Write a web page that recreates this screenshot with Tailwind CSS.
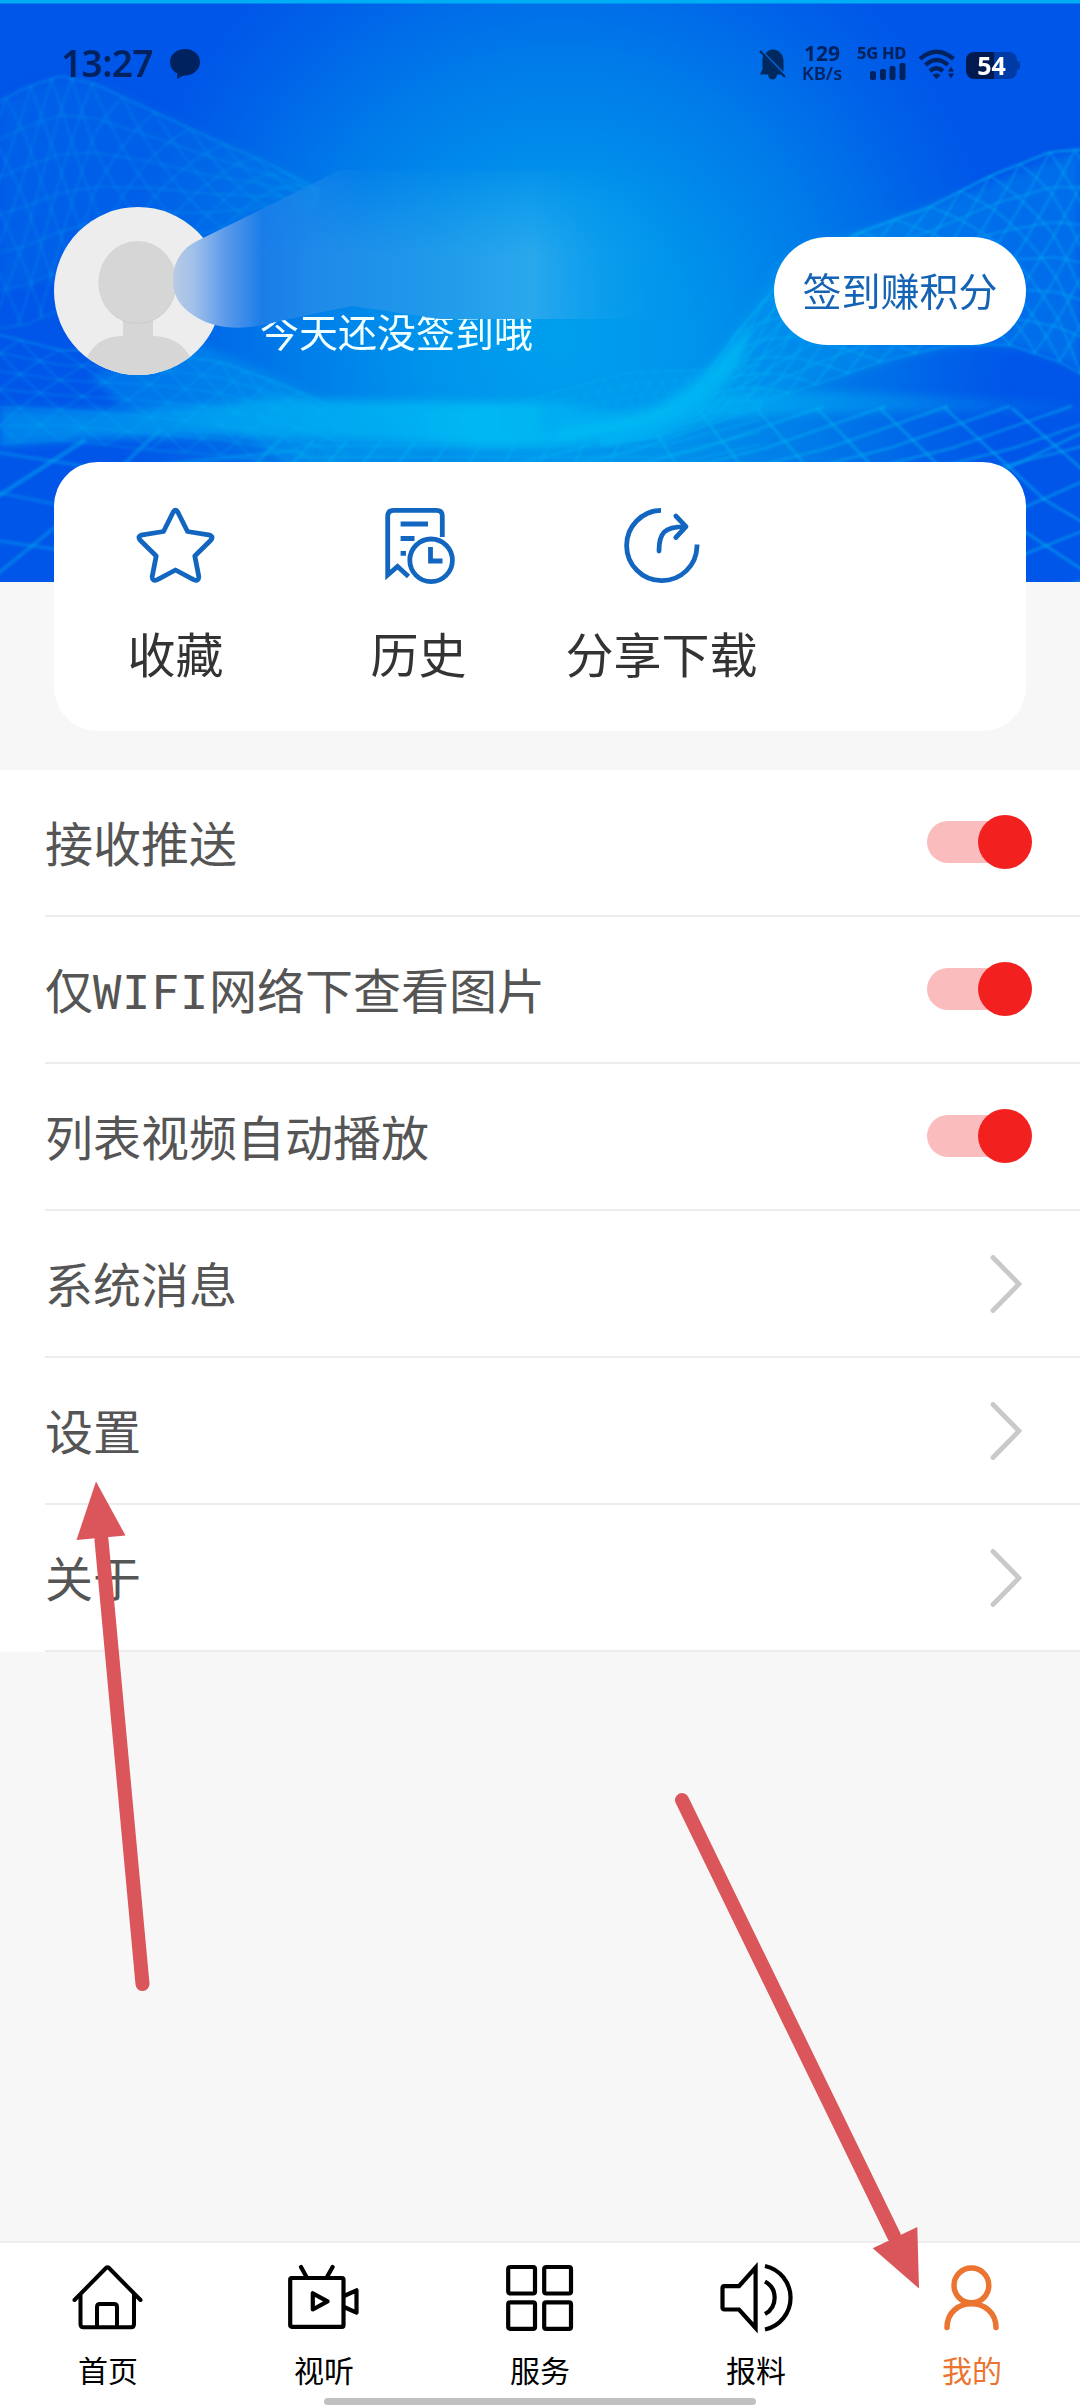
<!DOCTYPE html>
<html lang="zh-CN">
<head>
<meta charset="utf-8">
<title>我的</title>
<script src="https://cdn.jsdelivr.net/npm/@tailwindcss/browser@4"></script>
</head>
<body class="relative w-[1080px] h-[2408px] overflow-hidden bg-[#f7f7f7] font-['Noto_Sans_CJK_SC',sans-serif] flex flex-col">

<!-- Header -->
<header class="relative h-[582px] shrink-0 bg-[#0055e8]">
  <svg class="absolute inset-0" width="1080" height="582" viewBox="0 0 1080 582" fill="none">
    <defs>
      <radialGradient id="glow" gradientUnits="userSpaceOnUse" cx="0" cy="0" r="1" gradientTransform="translate(560 340) scale(450 470)">
        <stop offset="0" stop-color="#009fee"/><stop offset=".3" stop-color="#0094ec"/><stop offset=".6" stop-color="#007be9"/><stop offset=".85" stop-color="#0062e8"/><stop offset="1" stop-color="#0056e8"/>
      </radialGradient>
      <linearGradient id="band" x1="0" y1="0" x2="1080" y2="0" gradientUnits="userSpaceOnUse">
        <stop offset="0" stop-color="#00a8f0" stop-opacity=".55"/><stop offset=".3" stop-color="#00b4f2" stop-opacity=".75"/><stop offset=".45" stop-color="#00bdf4" stop-opacity=".85"/><stop offset=".62" stop-color="#00baf4" stop-opacity=".7"/><stop offset="1" stop-color="#00a0f0" stop-opacity=".1"/>
      </linearGradient>
      <filter id="soft" x="-10%" y="-30%" width="120%" height="160%"><feGaussianBlur stdDeviation="5"/></filter>
      <filter id="slight"><feGaussianBlur stdDeviation="1.1"/></filter>
    </defs>
    <rect width="1080" height="582" fill="url(#glow)"/>
    <g filter="url(#soft)">
      <path d="M0 105Q60 60 130 98L320 185L280 230L0 290Z" fill="#0080ea" opacity=".22"/>
      <path d="M0 408Q160 415 270 398Q400 402 560 402Q640 425 700 395Q800 385 1080 405V412Q800 410 700 420Q600 452 470 447Q340 436 220 436Q100 436 0 446Z" fill="url(#band)"/>
      <path d="M540 405Q620 375 700 372Q760 300 780 260L1080 150V370Q1000 325 880 365Q760 395 640 440Q580 445 540 430Z" fill="#009df0" opacity=".34"/>
      <path d="M560 426Q640 425 690 385Q720 362 750 325Q745 375 700 402Q640 436 560 440Z" fill="#00c0f5" opacity=".7"/>
      <path d="M190 340Q280 375 330 405Q400 425 440 446Q380 470 290 468Q250 425 120 405L90 375Z" fill="#00a8f0" opacity=".35"/>
    </g>
    <g id="mesh" filter="url(#slight)"></g>
    <rect width="1080" height="3.5" fill="#00aef6"/>
  </svg>

  <!-- Status bar -->
  <div class="relative flex items-center justify-between h-[128px] pl-[61px] pr-[62px] text-[#00225f] font-['Noto_Sans',sans-serif]">
    <div class="flex items-center gap-[17px]">
      <span class="text-[37px] leading-none font-semibold tracking-[-0.6px] w-[92px] whitespace-nowrap -mt-[3px]">13:27</span>
      <svg width="30" height="30" viewBox="0 0 30 30" fill="#00225f"><path d="M15 0C23.300 0 30 5.600 30 13S23.300 26.500 15 26.500Q12.500 26.500 7 30L7.500 24.500C3 22.500 0 18 0 13C0 5.600 6.700 0 15 0Z"/></svg>
    </div>
    <div class="flex items-center">
      <svg width="27" height="31" viewBox="0 0 27 31" fill="#00295f"><path d="M6.500 4.500Q9.500 .5 13.500 .5C19.500 .5 24.500 5 24.500 12V22.800ZM3.500 10Q3.500 8.500 4.200 6.500L22.500 25.500H18Q17.500 30.500 13.500 30.500T9 25.500H1L3.500 20Z"/><path d="M1 2L26 28" stroke="#00295f" stroke-width="2.200"/></svg>
      <div class="ml-[13px] w-[46px] h-[38px] -mt-[3px] flex flex-col items-center justify-between">
        <span class="text-[21px] leading-[18px] font-bold">129</span>
        <span class="text-[18.500px] leading-[18px] font-semibold">KB/s</span>
      </div>
      <div class="ml-[11px] w-[50px] flex flex-col items-end -mt-[2px]">
        <span class="text-[16.500px] leading-[13px] font-extrabold whitespace-nowrap tracking-[-0.3px]">5G HD</span>
        <svg class="mt-[4px]" width="36" height="17" viewBox="0 0 36 17" fill="#00225f"><rect y="8" width="6" height="9" rx="2"/><rect x="10" y="6" width="6" height="11" rx="2"/><rect x="19.500" y="3" width="6" height="14" rx="2"/><rect x="29.500" width="6" height="17" rx="2"/></svg>
      </div>
      <svg class="ml-[12px]" width="38" height="31" viewBox="0 0 38 31" fill="none" stroke="#00225f" stroke-width="4.300"><path d="M2 10Q18.500-4.500 35.500 10"/><path d="M7.500 16Q18.500 6 30 16"/><path d="M12 22Q18.500 16.500 25 22"/><path d="M14.500 26Q18.500 23 22.500 26L18.500 30Z" fill="#00225f" stroke="none"/><path d="M30 22.500L33 17.500L36 22.500ZM30 24.500H36L33 29.500Z" fill="#00225f" stroke="none"/></svg>
      <div class="relative mt-[2px] ml-[10px] w-[51px] h-[27px] rounded-[8px] bg-linear-to-r from-[#001a50] from-55% to-[#003ba5] to-55% flex items-center justify-center text-white text-[25px] font-bold leading-none">54
        <span class="absolute -right-[3px] top-[9px] w-[3px] h-[9px] rounded-r-[3px] bg-[#003ba5]"></span>
      </div>
      <span class="w-[1px]"></span>
    </div>
  </div>

  <!-- Profile -->
  <div class="relative flex items-start pl-[54px] pr-[54px] pt-[79px]">
    <svg width="168" height="168" viewBox="0 0 168 168" class="rounded-full bg-[#ededed]"><path d="M34 148C42 134 55 129 69 129V110H99V129C113 129 128 135 135 148L150 168H20Z" fill="#d6d6d6"/><ellipse cx="83.500" cy="76" rx="39" ry="41" fill="#cccccc"/><ellipse cx="83.500" cy="75" rx="39" ry="41" fill="#d6d6d6"/></svg>
    <div class="ml-[38px] mt-[95px] grow text-[39px] leading-[56px] text-[#f0ffff]">今天还没签到哦</div>
    <div class="mt-[30px] w-[252px] h-[108px] pb-[3px] rounded-full bg-white flex items-center justify-center text-[39px] leading-none text-[#1463b4]">签到赚积分</div>
  </div>

  <!-- Brushed-out nickname -->
  <svg class="absolute left-0 top-0" width="760" height="340" viewBox="0 0 760 340">
    <defs>
      <linearGradient id="smear" gradientUnits="userSpaceOnUse" x1="173" y1="0" x2="700" y2="0">
        <stop offset="0" stop-color="#b9cbe3"/><stop offset=".04" stop-color="#a0c0ea"/><stop offset=".1" stop-color="#5b9aea"/><stop offset=".17" stop-color="#1a7de8"/><stop offset=".27" stop-color="#1f8ae9"/><stop offset=".5" stop-color="#209aea"/><stop offset=".68" stop-color="#2aa8ec"/><stop offset=".82" stop-color="#12a0ed" stop-opacity=".6"/><stop offset="1" stop-color="#0094ec" stop-opacity="0"/>
      </linearGradient>
      <linearGradient id="fade" x1="0" y1="160" x2="0" y2="320" gradientUnits="userSpaceOnUse"><stop offset="0" stop-color="#000"/><stop offset=".2" stop-color="#555"/><stop offset=".6" stop-color="#fff"/></linearGradient>
      <linearGradient id="fadel" x1="170" y1="0" x2="360" y2="0" gradientUnits="userSpaceOnUse"><stop offset="0" stop-color="#fff"/><stop offset=".4" stop-color="#fff"/><stop offset="1" stop-color="#fff" stop-opacity="0"/></linearGradient>
      <mask id="m" maskUnits="userSpaceOnUse" x="0" y="0" width="760" height="340"><rect width="760" height="340" fill="url(#fade)"/><rect width="760" height="340" fill="url(#fadel)"/></mask>
    </defs>
    <path mask="url(#m)" d="M173 280C173 262 182 248 197 241L260 210L340 170H730V319H440L352 306L280 321Q225 337 193 315C178 305 173 294 173 280Z" fill="url(#smear)"/>
  </svg>
</header>

<!-- Shortcuts -->
<section class="relative -mt-[120px] mx-[54px] h-[269px] shrink-0 rounded-[44px] bg-white grid grid-cols-4 text-[48px] leading-[70px] text-[#333]">
  <div class="flex flex-col items-center pt-[43px] gap-[32px]">
    <svg width="80" height="80" viewBox="0 0 80 80" fill="none" stroke="#1266bf" stroke-width="4.800" stroke-linejoin="round"><path d="M37 7.500Q39.500 3 42 7.500L51.500 26.500L72.500 29.800Q78.500 31.200 74.500 35.500L58.800 51L62.800 71.500Q63 77 57.500 74.600L39.500 65L21.500 74.600Q16 77 16.200 71.500L20.200 51L4.500 35.500Q.5 31.200 6.500 29.800L27.500 26.500Z"/></svg>
    <span>收藏</span>
  </div>
  <div class="flex flex-col items-center pt-[43px] gap-[32px]">
    <svg width="80" height="80" viewBox="0 0 80 80" fill="none" stroke="#1266bf" stroke-width="4.800"><path d="M63.300 32V11.300Q63.300 5.300 57.300 5.300H14.700Q8.700 5.300 8.700 11.300V70L18.500 61.500L29.500 71.500"/><path d="M21.600 19H49M21.600 33.500H35.500M21.600 48.300H27"/><circle cx="52.100" cy="55.300" r="21.300"/><path d="M51.500 42V56H63.500"/></svg>
    <span>历史</span>
  </div>
  <div class="flex flex-col items-center pt-[43px] gap-[32px]">
    <svg width="80" height="80" viewBox="0 0 80 80" fill="none" stroke="#1266bf" stroke-width="4.800"><path d="M39 5.300A35.200 35.200 0 1 0 75 41.500V39.500"/><path stroke-linecap="round" stroke-linejoin="round" d="M37 46C37 28 42 21.700 63 21.700M53.800 11L64 21.700L53.800 32.500"/></svg>
    <span class="whitespace-nowrap">分享下载</span>
  </div>
</section>

<!-- Settings list -->
<section id="list" class="mt-[39px] h-[882px] shrink-0 bg-white pl-[45px] grid grid-rows-6 text-[48px] leading-[70px] text-[#555]">
  <div class="border-b-2 border-[#ededed] flex items-center justify-between pr-[48px]"><span class="pb-[4px]">接收推送</span>
    <span class="relative w-[105px] h-[54px] -mt-[1px] flex items-center"><i class="w-[95px] h-[42px] rounded-full bg-[#fabcbc]"></i><i class="absolute right-0 w-[54px] h-[54px] rounded-full bg-[#f2201f]"></i></span></div>
  <div class="border-b-2 border-[#ededed] flex items-center justify-between pr-[48px]"><span class="pb-[4px]">仅<span class="font-['DejaVu_Sans_Mono',monospace] text-[47px] tracking-[0.7px] leading-none">WIFI</span>网络下查看图片</span>
    <span class="relative w-[105px] h-[54px] -mt-[1px] flex items-center"><i class="w-[95px] h-[42px] rounded-full bg-[#fabcbc]"></i><i class="absolute right-0 w-[54px] h-[54px] rounded-full bg-[#f2201f]"></i></span></div>
  <div class="border-b-2 border-[#ededed] flex items-center justify-between pr-[48px]"><span class="pb-[4px]">列表视频自动播放</span>
    <span class="relative w-[105px] h-[54px] -mt-[1px] flex items-center"><i class="w-[95px] h-[42px] rounded-full bg-[#fabcbc]"></i><i class="absolute right-0 w-[54px] h-[54px] rounded-full bg-[#f2201f]"></i></span></div>
  <div class="border-b-2 border-[#ededed] flex items-center justify-between pr-[58px]"><span class="pb-[4px]">系统消息</span>
    <svg width="32" height="58" viewBox="0 0 32 58" fill="none" stroke="#c9c9c9" stroke-width="4.800" stroke-linecap="round"><path d="M3 2.500L29 29L3 55.500"/></svg></div>
  <div class="border-b-2 border-[#ededed] flex items-center justify-between pr-[58px]"><span class="pb-[4px]">设置</span>
    <svg width="32" height="58" viewBox="0 0 32 58" fill="none" stroke="#c9c9c9" stroke-width="4.800" stroke-linecap="round"><path d="M3 2.500L29 29L3 55.500"/></svg></div>
  <div class="border-b-2 border-[#ededed] flex items-center justify-between pr-[58px]"><span class="pb-[4px]">关于</span>
    <svg width="32" height="58" viewBox="0 0 32 58" fill="none" stroke="#c9c9c9" stroke-width="4.800" stroke-linecap="round"><path d="M3 2.500L29 29L3 55.500"/></svg></div>
</section>

<!-- Tab bar -->
<nav class="relative mt-auto h-[167px] shrink-0 border-t-2 border-[#eeeeee] bg-white grid grid-cols-5 text-[30px] leading-[44px] text-black">
  <div class="flex flex-col items-center pt-[19px] gap-[13px]">
    <svg width="72" height="72" viewBox="0 0 72 72" fill="none" stroke="#000" stroke-width="4" stroke-linecap="round"><path d="M2.500 38L34 6Q35.500 4.500 37 6L68.500 38M8.500 32V62.300Q8.500 65.300 11.500 65.300H59Q62 65.300 62 62.300V32M25 65V45Q25 42 28 42H42Q45 42 45 45V65"/></svg>
    <span>首页</span>
  </div>
  <div class="flex flex-col items-center pt-[19px] gap-[13px]">
    <svg width="72" height="72" viewBox="0 0 72 72" fill="none" stroke="#000" stroke-width="4.200" stroke-linecap="round" stroke-linejoin="round"><rect x="2.200" y="16" width="53.300" height="48.800" rx="1.500"/><path d="M13 5L18.500 15M44.600 5L39 15M24.800 31.300V47.500L39.500 39.300ZM56 34L68.500 28.300V50.700L56 45"/></svg>
    <span>视听</span>
  </div>
  <div class="flex flex-col items-center pt-[19px] gap-[13px]">
    <svg width="72" height="72" viewBox="0 0 72 72" fill="none" stroke="#000" stroke-width="4.200"><rect x="4.200" y="5" width="26.800" height="26.500" rx="2"/><rect x="40.200" y="5" width="26.800" height="26.500" rx="2"/><rect x="4.200" y="40.400" width="26.800" height="26.500" rx="2"/><rect x="40.200" y="40.400" width="26.800" height="26.500" rx="2"/></svg>
    <span>服务</span>
  </div>
  <div class="flex flex-col items-center pt-[19px] gap-[13px]">
    <svg class="overflow-visible" width="72" height="72" viewBox="0 0 72 72" fill="none" stroke="#000" stroke-width="4.200"><path d="M35.600 5.500V66L19 47.500H4.500Q2.500 47.500 2.500 45.500V26.200Q2.500 24.200 4.500 24.200H19Z"/><path d="M45 4A32.500 32.500 0 0 1 45 67.500M45 19.500A18.500 18.500 0 0 1 45 52"/></svg>
    <span>报料</span>
  </div>
  <div class="flex flex-col items-center pt-[19px] gap-[13px] text-[#ea7430]">
    <svg width="72" height="72" viewBox="0 0 72 72" fill="none" stroke="currentColor" stroke-width="5.500" stroke-linecap="round"><circle cx="35.400" cy="23.400" r="17.400"/><path d="M11 65.500C11 50 23 41.800 35.400 41.800S60 50 60 65.500"/></svg>
    <span>我的</span>
  </div>
  <div class="absolute left-[324px] bottom-[3px] w-[432px] h-[7px] rounded-full bg-[#c1c1c1]"></div>
</nav>

<!-- Annotation arrows -->
<svg class="absolute left-0 top-0" width="1080" height="2408" viewBox="0 0 1080 2408" fill="#da565b" stroke="#da565b" stroke-linecap="round">
  <path d="M101.500 1540L142.500 1984" stroke-width="14"/><path d="M96 1481.500L76.500 1540L125.500 1535.500Z" stroke="none"/>
  <path d="M682 1800L894 2236" stroke-width="14"/><path d="M919 2288.500L872.700 2248.300L917.300 2227Z" stroke="none"/>
</svg>

<script>
const g = document.getElementById('mesh');
// point at t (0..1) along a polyline
function at(p, t) {
  const n = p.length - 1, i = Math.min(n - 1, Math.max(0, Math.floor(t * n))), f = t * n - i;
  return [p[i][0] + (p[i + 1][0] - p[i][0]) * f, p[i][1] + (p[i + 1][1] - p[i][1]) * f];
}
function line(pts, o, w) {
  const e = document.createElementNS('http://www.w3.org/2000/svg', 'polyline');
  e.setAttribute('points', pts.map(p => p[0].toFixed(1) + ',' + p[1].toFixed(1)).join(' '));
  e.setAttribute('stroke', '#00b4f2'); e.setAttribute('stroke-opacity', o); e.setAttribute('stroke-width', w);
  g.appendChild(e);
}
// woven surface spanned between curves a and b
function mesh(a, b, rows, cols, skew, o, w) {
  const P = (u, v) => { const A = at(a, u), B = at(b, u); return [A[0] + (B[0] - A[0]) * v, A[1] + (B[1] - A[1]) * v]; };
  for (let r = 0; r <= rows; r++) { const l = []; for (let i = 0; i <= 60; i++) l.push(P(i / 60, r / rows)); line(l, o * (r ? 1 : 1.6), w); }
  for (const s of [skew, -skew]) for (let c = -cols; c <= cols * 2; c++) {
    const l = []; for (let i = 0; i <= 20; i++) { const u = c / cols + s * i / 20; if (u >= 0 && u <= 1) l.push(P(u, i / 20)); }
    if (l.length > 1) line(l, o, w);
  }
}
mesh([[-20,112],[25,88],[60,76],[95,84],[150,110],[210,138],[265,162],[320,190]],
     [[-20,330],[25,325],[60,310],[95,290],[150,265],[210,250],[265,230],[320,205]], 6, 12, .3, .13, 3.5);
mesh([[600,438],[660,422],[700,385],[735,335],[790,270],[860,232],[930,207],[990,176],[1050,152],[1100,148]],
     [[600,446],[660,438],[710,420],[760,402],[815,385],[880,362],[950,345],[1010,345],[1060,362],[1100,385]], 6, 18, .28, .34, 2.4);
mesh([[-20,330],[60,350],[150,352],[220,362],[270,380],[330,405]],
     [[-20,445],[60,440],[150,450],[220,455],[290,465],[360,480]], 6, 10, .3, .16, 3);
mesh([[500,408],[560,390],[630,372],[700,370],[760,365]], [[500,432],[560,440],[630,436],[700,410],[760,400]], 5, 22, .1, .2, 2);
// perspective floor
for (let i = 0; i < 11; i++) line([[280 + i * 34, 440], [245 + i * 36, 475]], .45, 2.4);
for (let i = 0; i < 10; i++) { const x = 640 + i * 56 + i * i; line([[x, 408], [x + 40 + i * 12, 470 + i * 6], [x + 160 + i * 22, 600]], .45, 3); }
for (let i = 0; i < 9; i++) { const x = 650 + i * 62; line([[x + 50, 406], [x - 70, 448], [x - 190, 478]], .4, 3); }
for (let i = 0; i < 4; i++) line([[1100, 424 + i * 50], [900, 520 + i * 42]], .42, 3.2);
for (let i = 0; i < 3; i++) line([[300, 446 + i * 11], [660, 446 + i * 11], [760, 420 + i * 12]], .3, 2.4);
line([[-5,498],[85,440]], .4, 4.5); line([[-5,576],[70,515],[160,430]], .35, 4); line([[-5,452],[110,470],[300,450]], .3, 4);
line([[-5,492],[60,505]], .25, 4); line([[-5,540],[60,550]], .3, 4);
</script>
</body>
</html>
